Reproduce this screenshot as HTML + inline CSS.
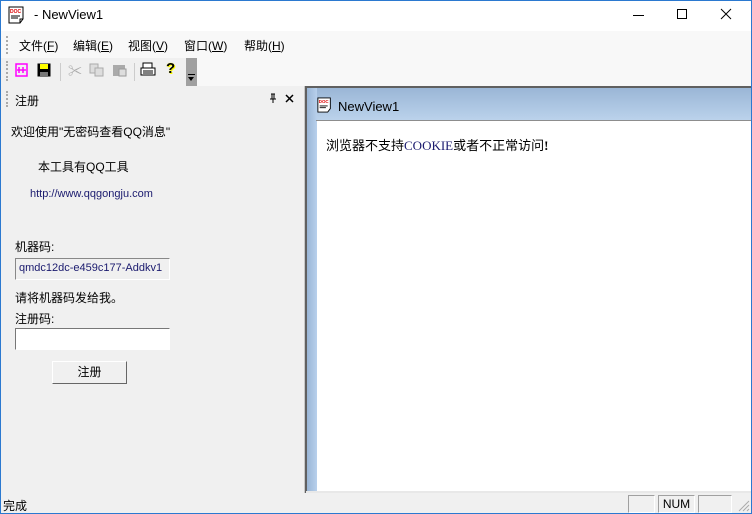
<!DOCTYPE html>
<html><head><meta charset="utf-8"><style>
*{margin:0;padding:0;box-sizing:border-box}
body{width:752px;height:514px;position:relative;overflow:hidden;background:#f0f0f0;font-family:"Liberation Sans","Noto Sans CJK SC",sans-serif;font-size:12px;color:#000}
.a{position:absolute}
.t{white-space:nowrap}
</style></head><body>
<div class="a" style="left:1px;top:1px;width:750px;height:30px;background:#fff"></div>
<svg class="a" style="left:8px;top:6px" width="18" height="18" viewBox="0 0 18 18"><path d="M1 1h14v12l-3 4H1z" fill="#fff" stroke="#000"/><path d="M12 17v-4h3" fill="none" stroke="#000"/><text x="2" y="7" font-size="5" fill="#d00" font-family="Liberation Sans" font-weight="bold">DOC</text><path d="M3 10h9M3 12h7" stroke="#000"/></svg>
<div class="a t" style="left:34px;top:7px;font-size:13px">- NewView1</div>
<div class="a" style="left:633px;top:15px;width:11px;height:1px;background:#000"></div>
<div class="a" style="left:677px;top:9px;width:10px;height:10px;border:1px solid #000"></div>
<svg class="a" style="left:720px;top:8px" width="12" height="12"><path d="M1 1L11 11M11 1L1 11" stroke="#000"/></svg>
<div class="a" style="left:1px;top:31px;width:750px;height:55px;background:#f8f8f8"></div>
<div class="a" style="left:6px;top:36px;width:2px;height:18px;border-left:2px dotted #aaa"></div>
<div class="a t" style="left:19px;top:37px">文件(<u>F</u>)</div>
<div class="a t" style="left:73px;top:37px">编辑(<u>E</u>)</div>
<div class="a t" style="left:128px;top:37px">视图(<u>V</u>)</div>
<div class="a t" style="left:184px;top:37px">窗口(<u>W</u>)</div>
<div class="a t" style="left:244px;top:37px">帮助(<u>H</u>)</div>
<div class="a" style="left:1px;top:58px;width:192px;height:28px;background:#f0f0f0"></div>
<div class="a" style="left:6px;top:61px;width:2px;height:20px;border-left:2px dotted #aaa"></div>
<svg class="a" style="left:15px;top:63px" width="14" height="14"><rect x="1" y="1" width="11" height="12" fill="none" stroke="#f0f" stroke-width="1.5"/><path d="M4 4v6M8 4v6M2 7h9" stroke="#f0f" stroke-width="1.5"/></svg>
<svg class="a" style="left:37px;top:63px" width="14" height="14"><rect x="0.5" y="0.5" width="13" height="13" fill="#000"/><rect x="3" y="1" width="8" height="5" fill="#ff0"/><rect x="3" y="9" width="8" height="5" fill="#777"/></svg>
<div class="a" style="left:60px;top:63px;width:1px;height:18px;background:#ccc"></div>
<div class="a t" style="left:68px;top:61px;color:#aaa;font-size:14px">✂</div>
<svg class="a" style="left:89px;top:63px" width="16" height="14"><rect x="1" y="1" width="8" height="9" fill="#ddd" stroke="#aaa"/><rect x="6" y="5" width="8" height="8" fill="#ddd" stroke="#aaa"/></svg>
<svg class="a" style="left:112px;top:63px" width="16" height="14"><rect x="1" y="2" width="12" height="11" fill="#aaa"/><rect x="7" y="6" width="7" height="7" fill="#ddd" stroke="#999"/></svg>
<div class="a" style="left:134px;top:63px;width:1px;height:18px;background:#ccc"></div>
<svg class="a" style="left:140px;top:62px" width="16" height="16"><rect x="3" y="1" width="9" height="5" fill="#fff" stroke="#000"/><rect x="1" y="6" width="14" height="7" fill="#fff" stroke="#000"/><path d="M3 9h10M3 11h10" stroke="#000"/></svg>
<div class="a t" style="left:166px;top:60px;font-size:15px;font-weight:bold;color:#000;text-shadow:0 0 1px #ff0,1px 1px 0 #ff0">?</div>
<div class="a" style="left:186px;top:58px;width:11px;height:28px;background:#a0a0a0"></div>
<div class="a" style="left:188px;top:74px;width:7px;height:1px;background:#000"></div>
<div class="a" style="left:188px;top:77px;width:0;height:0;border-left:3.5px solid transparent;border-right:3.5px solid transparent;border-top:4px solid #000"></div>
<div class="a" style="left:1px;top:87px;width:303px;height:405px;background:#f0f0f0"></div>
<div class="a" style="left:6px;top:91px;width:2px;height:16px;border-left:2px dotted #aaa"></div>
<div class="a t" style="left:15px;top:92px">注册</div>
<svg class="a" style="left:268px;top:93px" width="10" height="10"><path d="M3 1h4M4 1v5M6 1v5M2 6h6M5 6v4" stroke="#000"/></svg>
<svg class="a" style="left:285px;top:94px" width="9" height="9"><path d="M1 1L8 8M8 1L1 8" stroke="#000" stroke-width="1.5"/></svg>
<div class="a t" style="left:11px;top:123px">欢迎使用"无密码查看QQ消息"</div>
<div class="a t" style="left:38px;top:158px">本工具有QQ工具</div>
<div class="a t" style="left:30px;top:188px;font-size:11px;color:#1a1a6e">http://www.qqgongju.com</div>
<div class="a t" style="left:15px;top:238px">机器码:</div>
<div class="a" style="left:15px;top:258px;width:155px;height:22px;border:1px solid;border-color:#888 #fff #fff #888;background:#f0f0f0"></div>
<div class="a t" style="left:19px;top:262px;font-size:11px;color:#1a1a6e">qmdc12dc-e459c177-Addkv1</div>
<div class="a t" style="left:15px;top:289px">请将机器码发给我。</div>
<div class="a t" style="left:15px;top:310px">注册码:</div>
<div class="a" style="left:15px;top:328px;width:155px;height:22px;border:1px solid;border-color:#777 #fff #fff #777;background:#fff"></div>
<div class="a" style="left:52px;top:361px;width:75px;height:23px;border:1px solid;border-color:#fff #666 #666 #fff;background:#f0f0f0;text-align:center;line-height:21px">注册</div>
<div class="a" style="left:304px;top:86px;width:447px;height:407px;background:#c8c8c8"></div>
<div class="a" style="left:305px;top:86px;width:446px;height:2px;background:#606060"></div>
<div class="a" style="left:305px;top:86px;width:2px;height:407px;background:#606060"></div>
<div class="a" style="left:307px;top:88px;width:444px;height:33px;background:linear-gradient(#9ab6d6,#bcd3ec)"></div>
<div class="a" style="left:307px;top:88px;width:10px;height:404px;background:linear-gradient(90deg,#9ab6d6,#b8d0ec)"></div>
<div class="a" style="left:316px;top:120px;width:435px;height:1px;background:#8d8d8d"></div>
<svg class="a" style="left:317px;top:97px" width="16" height="16" viewBox="0 0 18 18"><path d="M1 1h14v12l-3 4H1z" fill="#fff" stroke="#000"/><text x="2" y="7" font-size="5" fill="#d00" font-family="Liberation Sans" font-weight="bold">DOC</text><path d="M3 10h9M3 12h7" stroke="#000"/></svg>
<div class="a t" style="left:338px;top:99px;font-size:13px">NewView1</div>
<div class="a" style="left:317px;top:121px;width:434px;height:370px;background:#fff"></div>
<div class="a t" style="left:326px;top:135px;font-family:'Liberation Serif','Noto Sans CJK SC',serif;font-size:13px">浏览器不支持<span style="color:#1a1a6e">COOKIE</span>或者不正常访问<b>!</b></div>
<div class="a" style="left:306px;top:491px;width:445px;height:2px;background:#e8e8e8"></div>
<div class="a" style="left:1px;top:493px;width:750px;height:20px;background:#f0f0f0"></div>
<div class="a t" style="left:3px;top:497px">完成</div>
<div class="a" style="left:628px;top:495px;width:27px;height:18px;border:1px solid;border-color:#a0a0a0 #fff #fff #a0a0a0"></div>
<div class="a" style="left:658px;top:495px;width:37px;height:18px;border:1px solid;border-color:#a0a0a0 #fff #fff #a0a0a0;text-align:center;line-height:16px">NUM</div>
<div class="a" style="left:698px;top:495px;width:34px;height:18px;border:1px solid;border-color:#a0a0a0 #fff #fff #a0a0a0"></div>
<svg class="a" style="left:738px;top:500px" width="12" height="12"><path d="M11 1L1 11M11 5L5 11M11 9L9 11" stroke="#aaa"/></svg>
<div class="a" style="left:0;top:0;width:752px;height:514px;border:1px solid #2b79d0"></div>
</body></html>
